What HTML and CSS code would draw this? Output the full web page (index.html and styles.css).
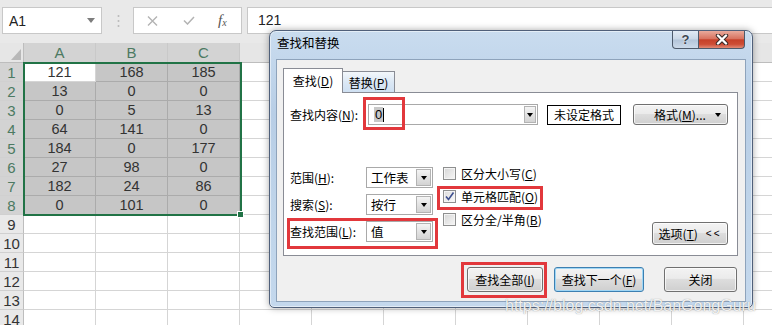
FILE: index.html
```html
<!DOCTYPE html>
<html lang="zh-CN">
<head>
  <meta charset="UTF-8">
  <meta name="viewport" content="width=device-width, initial-scale=1.0">
  <title>查找和替换</title>
  <link rel="stylesheet" href="styles.css">
</head>
<body>
  <div class="formula-bar">
    <div class="name-box">
      <span>A1</span>
      <svg width="8" height="5" viewBox="0 0 8 5"><path d="M0 0h8L4 5z" fill="#7d7d7d"/></svg>
    </div>
    <svg class="grip" width="3" height="14" viewBox="0 0 3 14">
      <circle cx="1.5" cy="2" r="1" fill="#b9b9b9"/>
      <circle cx="1.5" cy="7" r="1" fill="#b9b9b9"/>
      <circle cx="1.5" cy="12" r="1" fill="#b9b9b9"/>
    </svg>
    <div class="fx-box">
      <svg class="fx-cancel" width="11" height="10" viewBox="0 0 11 10"><path d="M1 0.5l9 9M10 0.5l-9 9" stroke="#b3b3b3" stroke-width="1.4" fill="none"/></svg>
      <svg class="fx-enter" width="12" height="9" viewBox="0 0 12 9"><path d="M1 4.5l3.5 3.5L11 1" stroke="#b3b3b3" stroke-width="1.5" fill="none"/></svg>
      <span class="fx"><i>f</i><sub>x</sub></span>
    </div>
    <div class="formula-input">121</div>
  </div>

  <div class="sheet">
    <div class="corner"></div>
    <div class="col-head sel">A</div>
    <div class="col-head sel">B</div>
    <div class="col-head sel">C</div>
    <!-- D to K sit under the dialog -->
    <div class="col-head"></div>
    <div class="col-head"></div>
    <div class="col-head"></div>
    <div class="col-head"></div>
    <div class="col-head"></div>
    <div class="col-head"></div>
    <div class="col-head"></div>
    <div class="col-head"></div>

    <div class="row-head sel">1</div><div class="cell active">121</div><div class="cell sel">168</div><div class="cell sel">185</div>
    <div class="row-head sel">2</div><div class="cell sel">13</div><div class="cell sel">0</div><div class="cell sel">0</div>
    <div class="row-head sel">3</div><div class="cell sel">0</div><div class="cell sel">5</div><div class="cell sel">13</div>
    <div class="row-head sel">4</div><div class="cell sel">64</div><div class="cell sel">141</div><div class="cell sel">0</div>
    <div class="row-head sel">5</div><div class="cell sel">184</div><div class="cell sel">0</div><div class="cell sel">177</div>
    <div class="row-head sel">6</div><div class="cell sel">27</div><div class="cell sel">98</div><div class="cell sel">0</div>
    <div class="row-head sel">7</div><div class="cell sel">182</div><div class="cell sel">24</div><div class="cell sel">86</div>
    <div class="row-head sel">8</div><div class="cell sel">0</div><div class="cell sel">101</div><div class="cell sel">0</div>
    <div class="row-head">9</div>
    <div class="row-head">10</div>
    <div class="row-head">11</div>
    <div class="row-head">12</div>
    <div class="row-head">13</div>
    <div class="row-head">14</div>

    <div class="selection"></div>
    <div class="fill-handle"></div>
  </div>

  <div class="dialog">
    <div class="title-bar">
      <span class="title">查找和替换</span>
      <div class="title-buttons">
        <div class="tb-btn help">?</div>
        <div class="tb-btn close">
          <svg width="14" height="11" viewBox="0 0 14 11">
            <path d="M3 1.5l8 8M11 1.5l-8 8" stroke="#3a2a28" stroke-width="4.4" stroke-linecap="round" fill="none"/>
            <path d="M3 1.5l8 8M11 1.5l-8 8" stroke="#fff" stroke-width="2.4" stroke-linecap="round" fill="none"/>
          </svg>
        </div>
      </div>
    </div>

    <div class="client">
      <div class="tabs">
        <div class="tab active"><span>查找(<u>D</u>)</span></div>
        <div class="tab"><span>替换(<u>P</u>)</span></div>
      </div>

      <div class="panel">
        <div class="find-row">
          <span class="find-label">查找内容(<u>N</u>):</span>
          <div class="combo find">
            <span class="combo-value"><span class="picked">0</span><span class="text-caret"></span></span>
            <span class="combo-arrow"></span>
          </div>
          <div class="no-format">未设定格式</div>
          <button type="button" class="btn format-btn"><span>格式(<u>M</u>)...</span><span class="btn-arrow"></span></button>
        </div>

        <div class="options">
          <div class="scope-col">
            <div class="field">
              <span class="field-label">范围(<u>H</u>):</span>
              <div class="combo small"><span class="combo-value">工作表</span><span class="combo-arrow"></span></div>
            </div>
            <div class="field">
              <span class="field-label">搜索(<u>S</u>):</span>
              <div class="combo small"><span class="combo-value">按行</span><span class="combo-arrow"></span></div>
            </div>
            <div class="field">
              <span class="field-label">查找范围(<u>L</u>):</span>
              <div class="combo small"><span class="combo-value">值</span><span class="combo-arrow"></span></div>
            </div>
          </div>

          <div class="check-col">
            <label class="check"><span class="box"></span><span>区分大小写(<u>C</u>)</span></label>
            <label class="check"><span class="box checked">
              <svg width="11" height="11" viewBox="0 0 11 11"><path d="M2 5.5l2.5 3L9.5 1.5" stroke="#3d4f8f" stroke-width="1.6" fill="none"/></svg>
            </span><span>单元格匹配(<u>O</u>)</span></label>
            <label class="check"><span class="box"></span><span>区分全/半角(<u>B</u>)</span></label>
          </div>

          <button type="button" class="btn options-btn"><span>选项(<u>T</u>)</span><span class="chevrons">&lt;&lt;</span></button>
        </div>
      </div>

      <div class="actions">
        <button type="button" class="btn find-all"><span>查找全部(<u>I</u>)</span></button>
        <button type="button" class="btn find-next"><span>查找下一个(<u>F</u>)</span></button>
        <button type="button" class="btn close-btn">关闭</button>
      </div>
    </div>

    <div class="mark mark-find"></div>
    <div class="mark mark-match"></div>
    <div class="mark mark-scope"></div>
    <div class="mark mark-all"></div>
  </div>

  <div class="watermark">https://blog.csdn.net/BanGongGuru</div>
</body>
</html>
```

FILE: styles.css
```css
body {
  margin: 0;
  width: 772px;
  height: 325px;
  overflow: hidden;
  position: relative;
  background-color: #fff;
  font-family: "Liberation Sans", Arial, sans-serif;
  color: #222;
}

/* formula bar */
.formula-bar {
  height: 43px;
  box-sizing: border-box;
  padding-top: 7px;
  background-color: #e9e9e9;
  display: flex;
  align-items: flex-start;
}
.name-box {
  margin-left: 2px;
  width: 100px;
  height: 27px;
  box-sizing: border-box;
  border: 1px solid #c8c8c8;
  background-color: #fff;
  display: flex;
  align-items: center;
  justify-content: space-between;
  padding: 0 6px 0 6px;
  font-size: 14px;
}
.grip {
  margin: 7px 0 0 15px;
}
.fx-box {
  margin-left: 13px;
  width: 109px;
  height: 27px;
  box-sizing: border-box;
  border: 1px solid #c8c8c8;
  background-color: #fff;
  display: flex;
  align-items: center;
  padding-left: 13px;
}
.fx-enter {
  margin-left: 25px;
}
.fx {
  margin-left: 23px;
  font-family: "Liberation Serif", serif;
  font-size: 15px;
  color: #555;
}
.fx sub {
  font-size: 10px;
  font-style: italic;
  vertical-align: -1px;
}
.formula-input {
  margin-left: 5px;
  flex: 1;
  height: 27px;
  box-sizing: border-box;
  border: 1px solid #c8c8c8;
  border-right: none;
  background-color: #fff;
  padding-left: 10px;
  line-height: 25px;
  font-size: 14px;
}

/* sheet grid */
.sheet {
  position: relative;
  display: grid;
  grid-template-columns: 24px repeat(11, 72px);
  grid-template-rows: 20px;
  grid-auto-rows: 19px;
  background-color: #fff;
  background-image:
    linear-gradient(to right, transparent 71px, #d5d5d5 71px),
    linear-gradient(to bottom, transparent 18px, #d5d5d5 18px);
  background-size: 72px 19px;
  background-position: 24px 20px;
}
.corner {
  background-color: #e6e6e6;
  border-right: 1px solid #bdbdbd;
  border-bottom: 1px solid #bdbdbd;
  position: relative;
}
.corner::after {
  content: "";
  position: absolute;
  right: 2px;
  bottom: 2px;
  width: 10px;
  height: 11px;
  background-color: #b8b8b8;
  clip-path: polygon(100% 0, 100% 100%, 0 100%);
}
.col-head {
  background-color: #e6e6e6;
  border-right: 1px solid #c9c9c9;
  border-bottom: 1px solid #bdbdbd;
  text-align: center;
  line-height: 20px;
  font-size: 15px;
  color: #444;
}
.row-head {
  grid-column: 1;
  background-color: #e9e9e9;
  border-right: 1px solid #bdbdbd;
  border-bottom: 1px solid #d0d0d0;
  text-align: center;
  line-height: 19px;
  font-size: 15px;
  color: #333;
}
.col-head, .row-head, .cell, .corner {
  box-sizing: border-box;
}
.col-head.sel, .row-head.sel {
  background-color: #d3d3d3;
  color: #4c7a62;
}
.cell {
  border-right: 1px solid #ababab;
  border-bottom: 1px solid #ababab;
  text-align: center;
  line-height: 18px;
  font-size: 14.5px;
  color: #333;
}
.cell.sel {
  background-color: #c6c6c6;
}
.cell.active {
  background-color: #fff;
  border-color: #d5d5d5;
}
.selection {
  position: absolute;
  left: 23px;
  top: 19px;
  width: 219px;
  height: 154px;
  box-sizing: border-box;
  border: 2px solid #217346;
}
.fill-handle {
  position: absolute;
  left: 237px;
  top: 168px;
  width: 7px;
  height: 7px;
  box-sizing: border-box;
  background-color: #217346;
  border: 1px solid #fff;
}

/* find & replace dialog */
.dialog {
  position: absolute;
  left: 269px;
  top: 30px;
  width: 484px;
  height: 278px;
  box-sizing: border-box;
  border: 1px solid #50607a;
  border-radius: 7px 7px 5px 5px;
  background: linear-gradient(to bottom, #c9dcef, #b8cee6 30%, #c0d5ea 70%, #c4d8ed);
  box-shadow: 0 0 7px rgba(0, 0, 0, 0.35), inset 0 0 0 1px rgba(255, 255, 255, 0.5);
  display: flex;
  flex-direction: column;
  font-family: "Noto Sans CJK SC", "Liberation Sans", sans-serif;
  font-size: 12px;
  color: #000;
}
.title-bar {
  height: 28px;
  flex-shrink: 0;
  display: flex;
  align-items: flex-start;
  padding: 0 7px 0 7px;
}
.title {
  line-height: 24px;
  font-size: 12.5px;
}
.title-buttons {
  margin-left: auto;
  display: flex;
}
.tb-btn {
  height: 18px;
  box-sizing: border-box;
  border: 1px solid #4d5a6b;
  border-top: none;
  display: flex;
  align-items: center;
  justify-content: center;
}
.help {
  width: 27px;
  border-radius: 0 0 0 4px;
  background: linear-gradient(to bottom, #e1eaf4, #c9d7e6 48%, #b3c5d9 52%, #ccdaea);
  font-family: "Liberation Sans", sans-serif;
  font-weight: bold;
  font-size: 13px;
  color: #3d4652;
  text-shadow: 0 0 2px #fff;
}
.close {
  width: 47px;
  margin-left: -1px;
  border-radius: 0 0 4px 0;
  background: linear-gradient(to bottom, #e9aa9c, #d87360 45%, #c6412a 52%, #cd4d35 78%, #e18a76);
}

.client {
  position: relative;
  flex: 1;
  margin: 0 6px 5px 6px;
  border: 1px solid #8ea3bb;
  background-color: #f0f0f0;
  padding: 8px 0 0 6px;
}
.tabs {
  display: flex;
  align-items: flex-end;
  height: 24px;
}
.tab {
  box-sizing: border-box;
  height: 21px;
  width: 52px;
  border: 1px solid #898c95;
  border-bottom: none;
  border-left: none;
  background: linear-gradient(to bottom, #f3f7fb, #dce8f5 50%, #cfe0f2);
  display: flex;
  align-items: center;
  justify-content: center;
}
.tab.active {
  position: relative;
  z-index: 1;
  width: 60px;
  height: 25px;
  margin-bottom: -1px;
  border-left: 1px solid #898c95;
  background: #fff;
  padding-bottom: 2px;
}
.panel {
  width: 455px;
  height: 164px;
  box-sizing: border-box;
  border: 1px solid #898c95;
  background-color: #fff;
  padding: 11px 9px 10px 6px;
}
.find-row {
  display: flex;
  align-items: center;
  height: 21px;
}
.find-label {
  width: 78px;
}
.combo {
  display: flex;
  box-sizing: border-box;
  height: 21px;
  border: 1px solid #a9a9a9;
  background-color: #fff;
}
.combo.find {
  width: 170px;
}
.combo.small {
  width: 67px;
}
.combo-value {
  flex: 1;
  display: flex;
  align-items: center;
  padding-left: 4px;
  font-size: 12.5px;
}
.combo.find .combo-value {
  padding-left: 5px;
}
.picked {
  background-color: #c8c8c8;
  padding: 0 1px;
  line-height: 15px;
  font-family: "Liberation Sans", sans-serif;
  font-size: 13px;
}
.text-caret {
  width: 1px;
  height: 14px;
  background-color: #000;
}
.combo-arrow {
  width: 15px;
  box-sizing: border-box;
  margin: 1px;
  border: 1px solid #b3b3b3;
  background: linear-gradient(to bottom, #f4f4f4, #e3e3e3 50%, #d3d3d3);
  display: flex;
  align-items: center;
  justify-content: center;
}
.combo.find .combo-arrow {
  width: 12px;
}
.combo-arrow::after,
.btn-arrow::after {
  content: "";
  border-left: 3.5px solid transparent;
  border-right: 3.5px solid transparent;
  border-top: 4px solid #000;
}
.no-format {
  margin-left: 9px;
  width: 74px;
  height: 20px;
  box-sizing: border-box;
  border: 1px solid #000;
  background-color: #fff;
  text-align: center;
  line-height: 18px;
}
.btn {
  box-sizing: border-box;
  padding: 0;
  border: 1px solid #707070;
  border-radius: 3px;
  background: linear-gradient(to bottom, #f3f3f3, #ebebeb 45%, #dddddd 50%, #cfcfcf);
  box-shadow: inset 0 0 0 1px rgba(255, 255, 255, 0.7);
  font-family: inherit;
  font-size: 12px;
  color: #000;
  display: flex;
  align-items: center;
  justify-content: center;
}
.format-btn {
  margin-left: 12px;
  width: 95px;
  height: 21px;
  justify-content: space-between;
  padding: 0 6px 0 20px;
}
.btn-arrow {
  display: flex;
}

.options {
  display: flex;
  margin-top: 37px;
  height: 83px;
}
.scope-col {
  padding-top: 5px;
  display: flex;
  flex-direction: column;
  gap: 6px;
}
.field {
  display: flex;
  align-items: center;
  height: 21px;
}
.field-label {
  width: 76px;
}
.check-col {
  margin-left: 10px;
  display: flex;
  flex-direction: column;
}
.check {
  height: 23px;
  display: flex;
  align-items: center;
  gap: 5px;
}
.box {
  width: 13px;
  height: 13px;
  box-sizing: border-box;
  border: 1px solid #8e8f8f;
  background: linear-gradient(135deg, #d6d6d6, #f6f6f6);
  box-shadow: inset 0 0 0 1px #f4f4f4;
  display: flex;
  align-items: center;
  justify-content: center;
}
.box.checked {
  background: linear-gradient(135deg, #dcdcdc, #fafafa);
}
.options-btn {
  margin-left: auto;
  align-self: flex-end;
  width: 76px;
  height: 23px;
}
.chevrons {
  margin-left: 8px;
  letter-spacing: 2px;
  font-family: "Liberation Sans", sans-serif;
  font-size: 10px;
}

.actions {
  display: flex;
  justify-content: flex-end;
  margin-top: 11px;
  padding-right: 8px;
}
.actions .btn {
  height: 25px;
}
.find-all {
  width: 76px;
}
.find-next {
  width: 90px;
  margin-left: 11px;
  border-color: #3c7fb1;
  box-shadow: inset 0 0 0 1px #9fd6f5;
}
.close-btn {
  width: 73px;
  margin-left: 20px;
}

/* red annotation boxes */
.mark {
  position: absolute;
  box-sizing: border-box;
  border: 3px solid #e2383c;
  z-index: 2;
}
.mark-find {
  left: 93px;
  top: 66px;
  width: 42px;
  height: 33px;
}
.mark-match {
  left: 167px;
  top: 155px;
  width: 106px;
  height: 24px;
}
.mark-scope {
  left: 17px;
  top: 187px;
  width: 151px;
  height: 31px;
}
.mark-all {
  left: 191px;
  top: 231px;
  width: 86px;
  height: 36px;
}

.watermark {
  position: absolute;
  left: 505px;
  top: 297px;
  font-family: "Liberation Sans", Arial, sans-serif;
  font-size: 16px;
  color: rgba(255, 255, 255, 0.9);
  text-shadow: 0 0 1px rgba(90, 90, 90, 0.7);
}
```
